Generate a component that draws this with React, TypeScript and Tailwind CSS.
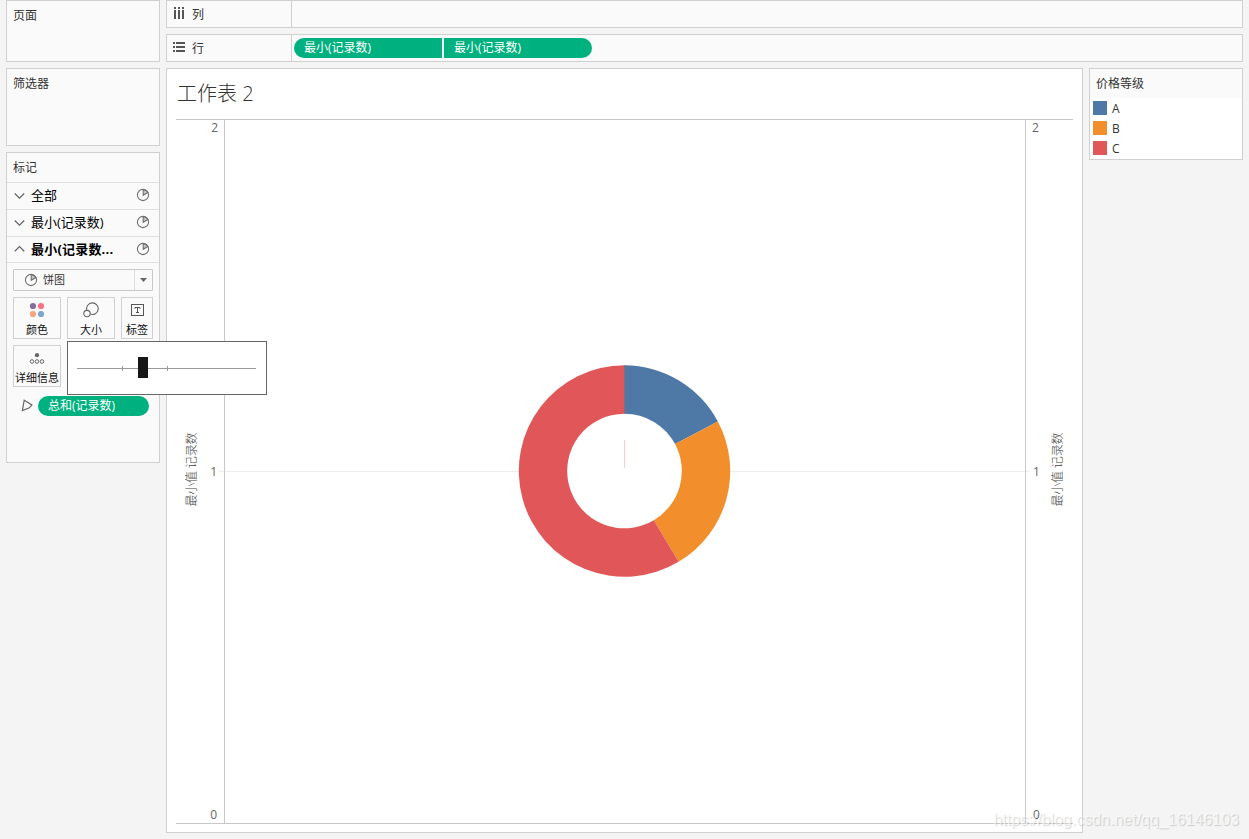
import React from "react";

const CX = 624.5;
const CY = 471;

function polar(r: number, deg: number) {
  const a = (deg * Math.PI) / 180;
  return `${(CX + r * Math.sin(a)).toFixed(2)} ${(CY - r * Math.cos(a)).toFixed(2)}`;
}

function arc(from: number, to: number, outer = 105.7, inner = 57.3) {
  const large = to - from > 180 ? 1 : 0;
  return `M${polar(outer, from)} A${outer} ${outer} 0 ${large} 1 ${polar(outer, to)} L${polar(inner, to)} A${inner} ${inner} 0 ${large} 0 ${polar(inner, from)} Z`;
}

const slices = [
  { name: "A", color: "#4e79a7", from: 0, to: 62 },
  { name: "B", color: "#f28e2b", from: 62, to: 149.2 },
  { name: "C", color: "#e15759", from: 149.2, to: 360 },
];

function PieIcon() {
  return (
    <svg width="14" height="14" viewBox="0 0 14 14" className="shrink-0" fill="none" stroke="#707070" strokeWidth="1.1">
      <circle cx="7" cy="7" r="5.6" />
      <path d="M7.2 1.6V7.2L11.9 4.6A5.6 5.6 0 0 0 7.2 1.6Z" fill="#c4c4c4" />
    </svg>
  );
}

function Chevron({ up = false }: { up?: boolean }) {
  return (
    <svg width="12" height="8" viewBox="0 0 12 8" className="mb-px shrink-0" fill="none" stroke="#666" strokeWidth="1.3">
      <path d={up ? "M.8 6.3L5.5 1.6L10.2 6.3" : "M.8 1.5L5.5 6.2L10.2 1.5"} />
    </svg>
  );
}

function MarkRow({ label, open = false }: { label: string; open?: boolean }) {
  return (
    <div className={open ? "flex h-[26px] items-center border-t border-[#e0e0e0] pl-[7px] pr-[9px]" : "flex h-[27px] items-center border-t border-[#e0e0e0] pl-[7px] pr-[9px]"}>
      <Chevron up={open} />
      <span className={open ? "ml-[5px] flex-1 whitespace-nowrap pt-px text-[13px] font-bold tracking-[0.2px] text-black" : "ml-[5px] flex-1 whitespace-nowrap text-[13px] text-black"}>{label}</span>
      <div className="mb-0.5">
        <PieIcon />
      </div>
    </div>
  );
}

function MarkButton({ label, narrow = false, children }: { label: string; narrow?: boolean; children: React.ReactNode }) {
  return (
    <div className={narrow ? "flex h-[42px] w-8 flex-col items-center border border-[#d0d0d0]" : "flex h-[42px] w-12 flex-col items-center border border-[#d0d0d0]"}>
      <div className="flex h-[25px] items-center justify-center">{children}</div>
      <span className="whitespace-nowrap text-[11px] leading-[14px] text-[#111]">{label}</span>
    </div>
  );
}

function SizePopup() {
  return (
    <div className="absolute left-[60px] top-[188px] z-10 h-[54px] w-[200px] border border-[#666] bg-white">
      <svg width="198" height="52" viewBox="68 342 198 52">
        <path d="M77 368.5H256M122.5 366V371M167.5 366V371" stroke="#999" />
        <rect x="138" y="357" width="10" height="21" fill="#171717" />
      </svg>
    </div>
  );
}

function Sidebar() {
  return (
    <aside className="flex w-[154px] shrink-0 flex-col gap-1.5 text-[12px] text-[#333]">
      <section className="h-[62px] border border-[#d0d0d0] bg-[#fafafa] pl-1.5 pt-1.5 leading-[18px]">页面</section>
      <section className="h-[78px] border border-[#d0d0d0] bg-[#fafafa] pl-1.5 pt-1.5 leading-[18px]">筛选器</section>
      <section className="relative h-[311px] border border-[#d0d0d0] bg-[#fafafa]">
        <div className="h-[29px] pl-1.5 pt-1.5 leading-[18px]">标记</div>
        <MarkRow label="全部" />
        <MarkRow label="最小(记录数)" />
        <MarkRow label="最小(记录数..." open />
        <div className="border-t border-[#e0e0e0] px-1.5 pt-1.5">
          <div className="flex h-[22px] items-stretch rounded-[1px] border border-[#c8c8c8] text-[11px]">
            <div className="flex flex-1 items-center gap-[5px] pl-2.5">
              <PieIcon />
              <span>饼图</span>
            </div>
            <div className="flex w-[18px] items-center justify-center border-l border-[#e0e0e0]">
              <svg width="7" height="4" viewBox="0 0 7 4"><path d="M0 0H7L3.5 4Z" fill="#666" /></svg>
            </div>
          </div>
          <div className="mt-1.5 flex gap-1.5">
            <MarkButton label="颜色">
              <svg width="16" height="16" viewBox="0 0 16 16" className="-mt-0.5">
                <circle cx="4" cy="4" r="3.1" fill="#866f9b" />
                <circle cx="12" cy="4" r="3.1" fill="#fb7185" />
                <circle cx="4" cy="12" r="3.1" fill="#f5a67c" />
                <circle cx="12" cy="12" r="3.1" fill="#7fa5cf" />
              </svg>
            </MarkButton>
            <MarkButton label="大小">
              <svg width="16" height="16" viewBox="0 0 16 16" className="-mt-0.5" fill="none" stroke="#666" strokeWidth="1.1">
                <path d="M3.8 8.1A5.8 5.8 0 1 1 7.4 12.1" />
                <circle cx="4" cy="11.6" r="3.2" />
              </svg>
            </MarkButton>
            <MarkButton label="标签" narrow>
              <svg width="14" height="12" viewBox="0 0 14 12" className="-mt-0.5 mr-px" fill="none" stroke="#555">
                <rect x="1.5" y=".5" width="12" height="11" />
                <path d="M5 4.8V3.5h5v1.3M7.5 3.5v5M6 8.5h3" />
              </svg>
            </MarkButton>
          </div>
          <div className="mt-1.5 flex">
            <MarkButton label="详细信息">
              <svg width="16" height="12" viewBox="0 0 16 12" fill="none" stroke="#666">
                <circle cx="8" cy="2.2" r="2.1" fill="#666" stroke="none" />
                <circle cx="3" cy="8.5" r="1.8" />
                <circle cx="8" cy="8.5" r="1.8" />
                <circle cx="13" cy="8.5" r="1.8" />
              </svg>
            </MarkButton>
          </div>
          <div className="mt-[9px] flex items-center">
            <svg width="12" height="14" viewBox="0 0 12 14" className="ml-2 mr-[5px]" fill="none" stroke="#666" strokeWidth="1.2">
              <path d="M3.2 1.2L10.9 6L8.4 8.8L1.4 11.6Z" />
            </svg>
            <div className="h-5 w-[111px] rounded-full bg-[#00b180] pl-2.5 leading-5 text-white">总和(记录数)</div>
          </div>
        </div>
        <SizePopup />
      </section>
    </aside>
  );
}

function Shelf({ label, icon, children }: { label: string; icon: React.ReactNode; children?: React.ReactNode }) {
  return (
    <div className="flex h-7 border border-[#d0d0d0] bg-[#fafafa] text-[12px] text-[#333]">
      <div className="flex w-[125px] items-center gap-[7px] border-r border-[#d0d0d0] pl-1.5">
        <div className="mb-0.5">{icon}</div>
        <span className="pt-0.5">{label}</span>
      </div>
      <div className="flex items-center gap-0.5 pl-0.5 text-white">{children}</div>
    </div>
  );
}

function Chart() {
  return (
    <svg width="915" height="713" viewBox="167 119 915 713" className="block">
      <path d="M219 471.5H1030" stroke="#ededed" />
      <path d="M176 119.5H1073M176 823.5H1073M224.5 119V823M1025.5 119V823" stroke="#c8c8c8" fill="none" />
      <circle cx={CX} cy={CY} r="58" fill="#fff" />
      {slices.map((s) => (
        <path key={s.name} d={arc(s.from, s.to)} fill={s.color} />
      ))}
      <path d="M624.5 365.3V413.7" stroke="#8a6a82" />
      <path d="M624.5 440V468" stroke="#f8cdd0" />
      <g fontSize="12" fill="#666" fontFamily='"Open Sans"'>
        <text x="218" y="132" textAnchor="end">2</text>
        <text x="217" y="476" textAnchor="end">1</text>
        <text x="217" y="819" textAnchor="end">0</text>
        <text x="1032" y="132">2</text>
        <text x="1033" y="476">1</text>
        <text x="1033" y="819">0</text>
      </g>
      <g fontSize="12" fill="#444" fontWeight="300" textAnchor="middle">
        <text transform="translate(196 469.5) rotate(-90)" textLength="74">最小值 记录数</text>
        <text transform="translate(1062 469.5) rotate(-90)" textLength="74">最小值 记录数</text>
      </g>
    </svg>
  );
}

export default function App() {
  return (
    <div className="relative flex h-[839px] w-[1249px] gap-1.5 overflow-hidden bg-[#f4f4f4] px-1.5 font-['Open_Sans','Noto_Sans_CJK_SC',sans-serif]">
      <Sidebar />
      <main className="flex flex-1 flex-col gap-1.5">
        <Shelf
          label="列"
          icon={
            <svg width="12" height="12" viewBox="0 0 12 12" fill="#555">
              <path d="M1 0h2v2H1zM5 0h2v2H5zM9 0h2v2H9zM1 3h2v9H1zM5 3h2v9H5zM9 3h2v9H9z" />
            </svg>
          }
        />
        <Shelf
          label="行"
          icon={
            <svg width="12" height="10" viewBox="0 0 12 10" fill="#555">
              <path d="M0 0h2v2H0zM0 4h2v2H0zM0 8h2v2H0zM3 0h9v2H3zM3 4h9v2H3zM3 8h9v2H3z" />
            </svg>
          }
        >
          <div className="h-5 w-[148px] rounded-l-full bg-[#00b180] pl-2.5 leading-5">最小(记录数)</div>
          <div className="h-5 w-[148px] rounded-r-full bg-[#00b180] pl-2.5 leading-5">最小(记录数)</div>
        </Shelf>
        <div className="flex items-start gap-1.5">
          <section className="h-[765px] w-[917px] border border-[#d0d0d0] bg-white">
            <h1 className="h-[50px] pl-2.5 text-[20px] font-light leading-[50px] text-[#333]">工作表 2</h1>
            <Chart />
          </section>
          <aside className="h-[92px] w-[154px] border border-[#d0d0d0] bg-white text-[12px] text-[#333]">
            <h2 className="h-[29px] bg-[#fafafa] pl-1.5 pt-1.5 leading-[18px]">价格等级</h2>
            <ul>
              {slices.map((s) => (
                <li key={s.name} className="flex h-5 items-center gap-[5px] pl-[3px]">
                  <span className="size-3.5" style={{ backgroundColor: s.color }} />
                  <span className="pt-0.5">{s.name}</span>
                </li>
              ))}
            </ul>
          </aside>
        </div>
      </main>
      <div className="absolute bottom-[9px] right-2.5 font-['Liberation_Sans',sans-serif] text-[16px] leading-5 text-white/60 [text-shadow:1px_1px_1px_rgba(0,0,0,0.16)]">
        https://blog.csdn.net/qq_16146103
      </div>
    </div>
  );
}
